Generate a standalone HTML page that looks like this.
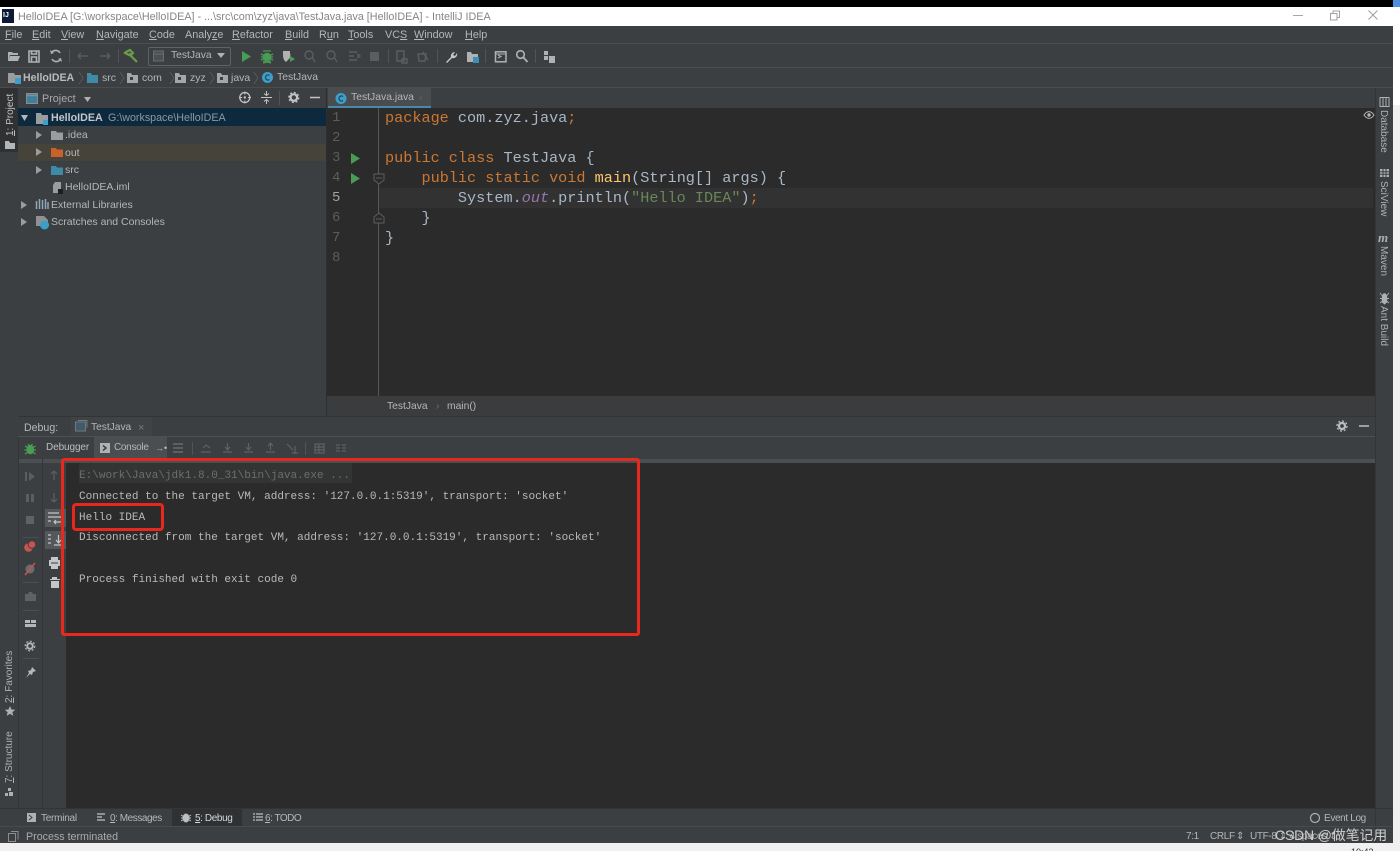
<!DOCTYPE html>
<html><head><meta charset="utf-8">
<style>
html,body{margin:0;padding:0;width:1400px;height:851px;overflow:hidden;background:#f0f0f0}
#r{position:absolute;left:0;top:0;width:1400px;height:851px;overflow:hidden;filter:blur(.35px);font-family:"Liberation Sans",sans-serif;color:#b4b7b9;font-size:11px}
.a{position:absolute}
.t{position:absolute;white-space:nowrap;line-height:14px}
.mn{position:absolute;top:28px;white-space:nowrap;line-height:14px;font-size:10.8px}
.m{position:absolute;white-space:pre;font-family:"Liberation Mono",monospace;font-size:15.2px;line-height:20px;color:#a9b7c6}
.c{position:absolute;white-space:pre;font-family:"Liberation Mono",monospace;font-size:11.03px;line-height:14px;color:#b8bab8}
.k{color:#cc7832}.g{color:#6a8759}
u{text-decoration:underline;text-underline-offset:1px}
.n{position:absolute;left:332px;font-family:"Liberation Mono",monospace;font-size:14px;line-height:20px;color:#5a5d5e}
.v{position:absolute;white-space:nowrap;transform-origin:0 0;line-height:12px;font-size:10px;color:#aeb1b3}
.b{font-size:10px;letter-spacing:-.35px}
svg{position:absolute;overflow:visible}
.sep{position:absolute;width:1px;background:#515354}
</style></head><body><div id="r">
<!-- top black / title -->
<div class="a" style="left:0;top:0;width:1393px;height:7px;background:#000"></div>
<div class="a" style="left:1393px;top:0;width:7px;height:7px;background:#4d8ee0"></div>
<div class="a" style="left:0;top:7px;width:1400px;height:19px;background:#fff"></div>
<div class="a" style="left:1393px;top:26px;width:7px;height:79px;background:#fff"></div>
<div class="a" style="left:2px;top:9px;width:12px;height:14px;background:#0c1a3a"></div>
<div class="t" style="left:3px;top:9px;font-size:7px;font-weight:bold;color:#fff">IJ</div>
<div class="t" style="left:18px;top:10px;font-size:10.77px;color:#858585">HelloIDEA [G:\workspace\HelloIDEA] - ...\src\com\zyz\java\TestJava.java [HelloIDEA] - IntelliJ IDEA</div>
<div class="a" style="left:1293px;top:15px;width:10px;height:1px;background:#a8a8a8"></div>
<svg style="left:1330px;top:10px" width="12" height="12"><path d="M.5 3.500h6.500v6.500H.5zM3 3.500V1H9.500v6.500H7" fill="none" stroke="#a0a0a0"/></svg>
<svg style="left:1368px;top:10px" width="12" height="12"><path d="M.5 .5l9 9M9.500 .5l-9 9" stroke="#a0a0a0" fill="none"/></svg>
<!-- IDE frame -->
<div class="a" style="left:0;top:26px;width:1393px;height:817px;background:#3c3f41"></div>
<div class="a" style="left:0;top:43px;width:1393px;height:1px;background:#4a4c4e"></div>
<div class="a" style="left:0;top:67px;width:1393px;height:1px;background:#4a4c4e"></div>
<div class="a" style="left:0;top:87px;width:1393px;height:1px;background:#4a4c4e"></div>
<!-- menu -->
<div class="mn" style="left:5px"><u>F</u>ile</div>
<div class="mn" style="left:32px"><u>E</u>dit</div>
<div class="mn" style="left:61px"><u>V</u>iew</div>
<div class="mn" style="left:96px"><u>N</u>avigate</div>
<div class="mn" style="left:149px"><u>C</u>ode</div>
<div class="mn" style="left:185px">Analy<u>z</u>e</div>
<div class="mn" style="left:232px"><u>R</u>efactor</div>
<div class="mn" style="left:285px"><u>B</u>uild</div>
<div class="mn" style="left:319px">R<u>u</u>n</div>
<div class="mn" style="left:348px"><u>T</u>ools</div>
<div class="mn" style="left:385px">VC<u>S</u></div>
<div class="mn" style="left:414px"><u>W</u>indow</div>
<div class="mn" style="left:465px"><u>H</u>elp</div>
<!-- toolbar -->
<svg style="left:0;top:44px" width="580" height="24">
<path d="M8 8h4l1 1h5v2H10l-2 6zM10 12h10l-2 5H8z" fill="#afb1b3"/>
<path d="M29 7h10v11H29zM31.500 7v3h5V7M31.500 13h5v5h-5z" fill="none" stroke="#afb1b3" stroke-width="1.600"/>
<path d="M60 9a5 5 0 0 0-8-1M52 15a5 5 0 0 0 8 1" fill="none" stroke="#afb1b3" stroke-width="1.600"/><path d="M50 6l1 4 3-1zM62 18l-1-4-3 1z" fill="#afb1b3"/>
<path d="M78 12h10M78 12l3-3M78 12l3 3M100 12h10M110 12l-3-3M110 12l-3 3" fill="none" stroke="#5b5e60" stroke-width="1.300"/>
<path d="M126 8l4-2 2 2 1 1-2 2-1-1-1 1-4-2zM130 11l7 7" fill="none" stroke="#6a9a4c" stroke-width="2.200"/>
<path d="M242 7l9 5.500-9 5.500z" fill="#499c54"/>
<circle cx="267" cy="13" r="4.200" fill="#499c54"/><path d="M263 7l8 0M261 10l12 6M273 10l-12 6M261 13h12M263 19l8-2M271 19l-8-2" stroke="#499c54" stroke-width="1.300"/>
<path d="M283 7h7v2a6 6 0 0 1-2 7l-2 2c-3-2-3-6-3-8z" fill="#afb1b3"/><path d="M290 12l5 3-5 3z" fill="#499c54"/>
<g fill="none" stroke="#5b5e60" stroke-width="1.400"><circle cx="309" cy="11" r="4"/><path d="M312 13l3 5"/><circle cx="331" cy="11" r="4"/><path d="M334 13l3 5"/><path d="M349 8h8M349 12h5M349 16h8M357 10l3 2-3 2"/><path d="M397 7h7v10h-7zM402 15h5v4h-5z"/><path d="M418 10h8l-1 7h-6zM423 8l5 8"/></g>
<rect x="370" y="8" width="9" height="9" fill="#5b5e60"/>
<path d="M446 18l5-5a4 4 0 0 1 4-5l-2 3 2 1 2-3a4 4 0 0 1-5 5l-5 5z" fill="#c4c6c8"/>
<path d="M467 8h4l1 2h6v8h-11z" fill="#afb1b3"/><rect x="473" y="13" width="6" height="6" fill="#3d8eb9"/>
<rect x="495.500" y="7.800" width="10.500" height="10" fill="none" stroke="#afb1b3" stroke-width="1.500"/><path d="M498 11l3 1.500-3 1.500M496 10h10" stroke="#afb1b3" fill="none"/>
<circle cx="520.500" cy="10.500" r="3.800" fill="none" stroke="#afb1b3" stroke-width="1.600"/><path d="M523.500 13.500l4 4.500" stroke="#afb1b3" stroke-width="1.800"/>
<path d="M544 7h4v4h-4zM544 12h4v4h-4zM549 12h6v7h-6z" fill="#afb1b3"/>
</svg>
<div class="sep" style="left:69px;top:49px;height:14px"></div>
<div class="sep" style="left:118px;top:49px;height:14px"></div>
<div class="sep" style="left:388px;top:49px;height:14px"></div>
<div class="sep" style="left:437px;top:49px;height:14px"></div>
<div class="sep" style="left:485px;top:49px;height:14px"></div>
<div class="sep" style="left:535px;top:49px;height:14px"></div>
<div class="a" style="left:148px;top:47px;width:81px;height:17px;border:1px solid #5f6263;border-radius:2px"></div>
<svg style="left:153px;top:50px" width="12" height="12"><rect x=".5" y="1" width="10" height="10" fill="#4b5153" stroke="#6a6d6f"/><path d="M1 4h9" stroke="#6a6d6f"/></svg>
<div class="t" style="left:171px;top:49px;font-size:10.300px">TestJava</div>
<svg style="left:217px;top:53px" width="10" height="6"><path d="M0 0h8l-4 5z" fill="#afb1b3"/></svg>
<!-- breadcrumb -->
<svg style="left:0;top:68px" width="290" height="20">
<path d="M8 5h6l1 2h6v8H8z" fill="#9a9c9e"/><rect x="15" y="10" width="6" height="6" fill="#3d9fc9"/>
<path d="M87 5h4l1 2h6v8H87z" fill="#3f8aa8"/>
<path d="M127 5h4l1 2h6v8h-11z" fill="#a4a6a8"/><rect x="130" y="9" width="3" height="3" fill="#3c3f41"/>
<path d="M175 5h4l1 2h6v8h-11z" fill="#a4a6a8"/><rect x="178" y="9" width="3" height="3" fill="#3c3f41"/>
<path d="M217 5h4l1 2h6v8h-11z" fill="#a4a6a8"/><rect x="220" y="9" width="3" height="3" fill="#3c3f41"/>
<circle cx="267.500" cy="9.500" r="5.500" fill="#3d9fc9"/><path d="M269.500 7.500a2.500 2.500 0 1 0 0 4" stroke="#24465a" fill="none" stroke-width="1.200"/>
<path d="M79 4l4 6-4 6M120 4l4 6-4 6M170 4l4 6-4 6M210 4l4 6-4 6M254 4l4 6-4 6" stroke="#56595b" fill="none"/>
</svg>
<div class="t" style="left:23px;top:71px;font-weight:bold;font-size:10.600px;color:#b8babc">HelloIDEA</div>
<div class="t" style="left:102px;top:71px;font-size:10.500px">src</div>
<div class="t" style="left:142px;top:71px;font-size:10.500px">com</div>
<div class="t" style="left:190px;top:71px;font-size:10.500px">zyz</div>
<div class="t" style="left:231px;top:71px;font-size:10.500px">java</div>
<div class="t" style="left:277px;top:71px;font-size:10.400px">TestJava</div>
<!-- left stripe -->
<div class="a" style="left:0;top:88px;width:18px;height:64px;background:#2f3133"></div>
<div class="v" style="left:5px;top:136px;transform:rotate(-90deg);color:#c0c2c4"><u>1</u>: Project</div>
<svg style="left:5px;top:141px" width="11" height="10"><path d="M0 0h4l1 2h5v6H0z" fill="#b4b6b8"/></svg>
<div class="v" style="left:4px;top:703px;transform:rotate(-90deg)"><u>2</u>: Favorites</div>
<svg style="left:5px;top:706px" width="11" height="11"><path d="M5 0l1.500 3.500 3.700.3-2.800 2.400.9 3.600L5 7.900 1.700 9.800l.9-3.600L-.2 3.800l3.700-.3z" fill="#aeb0b2"/></svg>
<div class="v" style="left:4px;top:783px;transform:rotate(-90deg)"><u>7</u>: Structure</div>
<svg style="left:5px;top:788px" width="10" height="10"><path d="M3 0h3v3H3zM0 5h3v3H0zM4 4h4v4H4z" fill="#aeb0b2"/></svg>
<!-- project header -->
<svg style="left:26px;top:93px" width="13" height="13"><rect x=".5" y=".5" width="11" height="10" fill="#3f7f9e" stroke="#8a8d8f"/><path d="M1 2.500h10" stroke="#8a8d8f" stroke-width="1.500"/></svg>
<div class="t" style="left:42px;top:92px;font-size:10.800px;color:#a6a9ab">Project</div>
<svg style="left:84px;top:97px" width="8" height="6"><path d="M0 0h7l-3.500 5z" fill="#afb1b3"/></svg>
<svg style="left:238px;top:90px" width="84" height="16">
<circle cx="6.800" cy="7.500" r="5" fill="none" stroke="#c2c4c6" stroke-width="1.300"/><circle cx="6.800" cy="7.500" r="1.200" fill="#c2c4c6"/><path d="M6.800 1.500v3M6.800 10.500v3M1 7.500h3M10 7.500h3" stroke="#c2c4c6"/>
<path d="M23 7.500h11M28.500 1v4M26 3.500l2.500 2 2.500-2M28.500 14v-4M26 11.500l2.500-2 2.500 2" stroke="#c2c4c6" fill="none"/>
<circle cx="55.800" cy="7.500" r="3.300" fill="none" stroke="#c2c4c6" stroke-width="2.200"/><circle cx="55.800" cy="7.500" r="5" fill="none" stroke="#c2c4c6" stroke-width="1.200" stroke-dasharray="2 1.900"/>
<path d="M72 7.500h10" stroke="#c2c4c6" stroke-width="1.500"/>
</svg>
<div class="sep" style="left:279px;top:91px;height:14px"></div>
<!-- tree -->
<div class="a" style="left:18px;top:108px;width:308px;height:18px;background:#0d293e"></div>
<div class="a" style="left:18px;top:144px;width:308px;height:17px;background:#45433a"></div>
<svg style="left:18px;top:108px" width="150" height="125">
<path d="M3 7h7l-3.500 6z" fill="#b4b6b8"/>
<path d="M18 23l6 4-6 4zM18 40l6 4-6 4zM18 58l6 4-6 4zM3 93l6 4-6 4zM3 110l6 4-6 4z" fill="#9a9c9e"/>
<path d="M18 5h5l1 2h6v9H18z" fill="#9a9c9e"/><rect x="25" y="12" width="5" height="5" fill="#3d9fc9"/>
<path d="M33 23h5l1 1.500h6v7.500H33z" fill="#9a9c9e"/>
<path d="M33 40h5l1 1.500h6v7.500H33z" fill="#c8622a"/>
<path d="M33 58h5l1 1.500h6v7.500H33z" fill="#3f8aa8"/>
<path d="M37 74h6v11h-8v-8z" fill="#9a9c9e"/><rect x="40" y="81" width="5" height="5" fill="#1f1f1f"/>
<path d="M18.500 93v8M21.500 91v10M24.500 92v9M27.500 91v10M30 94v7" stroke="#8ea9b8" stroke-width="1.500"/>
<path d="M18 108h8l4 4v6H18z" fill="#8f9193"/><circle cx="26.500" cy="117" r="4.500" fill="#3d9fc9"/>
</svg>
<div class="t" style="left:51px;top:111px;font-weight:bold;font-size:10.700px;color:#c4c6c8">HelloIDEA</div>
<div class="t" style="left:108px;top:111px;font-size:10.700px;color:#8a9aa6">G:\workspace\HelloIDEA</div>
<div class="t" style="left:65px;top:128px;font-size:10.500px">.idea</div>
<div class="t" style="left:65px;top:146px;font-size:10.500px">out</div>
<div class="t" style="left:65px;top:163px;font-size:10.500px">src</div>
<div class="t" style="left:65px;top:180px;font-size:10.500px">HelloIDEA.iml</div>
<div class="t" style="left:51px;top:198px;font-size:10.500px">External Libraries</div>
<div class="t" style="left:51px;top:215px;font-size:10.500px">Scratches and Consoles</div>
<!-- divider -->
<div class="a" style="left:326px;top:88px;width:1px;height:328px;background:#2c2e2f"></div>
<!-- editor -->
<div class="a" style="left:327px;top:88px;width:1048px;height:20px;background:#3c3f41"></div>
<div class="a" style="left:328px;top:88px;width:103px;height:20px;background:#4a4d4f"></div>
<div class="a" style="left:328px;top:106px;width:103px;height:2px;background:#4a88a8"></div>
<svg style="left:335px;top:92px" width="13" height="13"><circle cx="6" cy="6.500" r="5.500" fill="#3d9fc9"/><path d="M8 4.500a2.500 2.500 0 1 0 0 4" stroke="#24465a" fill="none" stroke-width="1.200"/></svg>
<div class="t" style="left:351px;top:91px;font-size:10.400px">TestJava.java</div>
<div class="t" style="left:418px;top:91px;font-size:9px;color:#5c5f61">×</div>
<div class="a" style="left:327px;top:108px;width:1048px;height:288px;background:#2b2b2b"></div>
<div class="a" style="left:378px;top:108px;width:1px;height:288px;background:#555759"></div>
<div class="a" style="left:379px;top:188px;width:994px;height:20px;background:#323232"></div>
<div class="n" style="top:108px">1</div>
<div class="n" style="top:128px">2</div>
<div class="n" style="top:148px">3</div>
<div class="n" style="top:168px">4</div>
<div class="n" style="top:188px;color:#a4a3a3">5</div>
<div class="n" style="top:208px">6</div>
<div class="n" style="top:228px">7</div>
<div class="n" style="top:248px">8</div>
<svg style="left:350px;top:152px" width="34" height="72">
<path d="M1 1l9 5.500-9 5.500zM1 21l9 5.500-9 5.500z" fill="#499c54"/>
<path d="M24 22h10v6l-5 4-5-4zM26 26h6M24 71h10v-6l-5-4-5 4zM26 67h6" fill="#2b2b2b" stroke="#5a5d5f" stroke-width="1"/>
</svg>
<div class="m" style="left:385px;top:108px"><span class="k">package</span> com.zyz.java<span class="k">;</span></div>
<div class="m" style="left:385px;top:148px"><span class="k">public class</span> TestJava {</div>
<div class="m" style="left:385px;top:168px">    <span class="k">public static void</span> <span style="color:#ffc66d">main</span>(String[] args) {</div>
<div class="m" style="left:385px;top:188px">        System.<span style="color:#9876aa;font-style:italic">out</span>.println(<span class="g">"Hello IDEA"</span>)<span class="k">;</span></div>
<div class="m" style="left:385px;top:208px">    }</div>
<div class="m" style="left:385px;top:228px">}</div>
<svg style="left:1364px;top:111px" width="11" height="8"><path d="M0 4c3-4.500 7-4.500 10 0-3 4.500-7 4.500-10 0z" fill="none" stroke="#b4b6b8"/><circle cx="5" cy="4" r="1.700" fill="#b4b6b8"/></svg>
<div class="a" style="left:327px;top:396px;width:1048px;height:20px;background:#3a3c3e"></div>
<div class="t" style="left:387px;top:400px;font-size:10.300px">TestJava</div>
<div class="t" style="left:436px;top:400px;font-size:10px;color:#6f7274">›</div>
<div class="t" style="left:447px;top:400px;font-size:10.300px">main()</div>
<!-- right stripe -->
<div class="a" style="left:1375px;top:88px;width:18px;height:755px;background:#3c3f41;border-left:1px solid #323436;box-sizing:border-box"></div>
<svg style="left:1380px;top:97px" width="11" height="210">
<path d="M0 .5h9v9H0zM3 .5v9M6 .5v9" fill="none" stroke="#aeb0b2"/>
<path d="M0 72h9v8H0z" fill="#aeb0b2"/><path d="M3 72v8M6 72v8M0 74.700h9M0 77.300h9" stroke="#3c3f41"/>
<path d="M3.500 197a2 2 0 0 1 2 0l1.200 2v6l-2.200 2-2.200-2v-6zM0 196l2.500 3M9 196l-2.500 3M0 201.500h9M0 206l2.500-2M9 206l-2.500-2" stroke="#aeb0b2" stroke-width=".9" fill="#aeb0b2"/>
</svg>
<div class="t" style="left:1378px;top:231px;font-size:13px;font-weight:bold;font-style:italic;color:#aeb0b2;font-family:'Liberation Serif',serif">m</div>
<div class="v" style="left:1389px;top:110px;transform:rotate(90deg)">Database</div>
<div class="v" style="left:1389px;top:181px;transform:rotate(90deg)">SciView</div>
<div class="v" style="left:1389px;top:246px;transform:rotate(90deg)">Maven</div>
<div class="v" style="left:1389px;top:306px;transform:rotate(90deg)">Ant Build</div>
<!-- debug panel -->
<div class="a" style="left:18px;top:416px;width:1357px;height:1px;background:#323436"></div>
<div class="a" style="left:18px;top:417px;width:1357px;height:19px;background:#3c3f41"></div>
<div class="a" style="left:18px;top:436px;width:1357px;height:1px;background:#4d5052"></div>
<div class="t" style="left:24px;top:421px;font-size:10.600px">Debug:</div>
<div class="a" style="left:71px;top:417px;width:81px;height:19px;background:#404345"></div>
<svg style="left:75px;top:420px" width="13" height="12"><rect x=".5" y="2" width="10" height="9" fill="#3f5a68" stroke="#6f7a80"/><path d="M3 .5h9v7" fill="none" stroke="#6f7a80"/></svg>
<div class="t" style="left:91px;top:421px;font-size:10.200px">TestJava</div>
<div class="t" style="left:138px;top:421px;font-size:11px;color:#77797b">×</div>
<svg style="left:1335px;top:419px" width="34" height="14"><circle cx="7" cy="7" r="3" fill="none" stroke="#bcbec0" stroke-width="2.200"/><circle cx="7" cy="7" r="5" fill="none" stroke="#bcbec0" stroke-width="1.300" stroke-dasharray="2 1.900"/><path d="M24 7h10" stroke="#bcbec0" stroke-width="1.500"/></svg>
<!-- debug tabs row -->
<div class="a" style="left:94px;top:437px;width:73px;height:22px;background:#4b4e50"></div>
<div class="a" style="left:18px;top:459px;width:1357px;height:4px;background:#4c4f51"></div>
<div class="t b" style="left:46px;top:441px;color:#bcbec0;letter-spacing:-.1px">Debugger</div>
<svg style="left:100px;top:442px" width="12" height="12"><rect width="10" height="10" y="1" fill="#afb1b3"/><path d="M3 3.500l3 2.500-3 2.500" stroke="#3c3f41" fill="none" stroke-width="1.500"/></svg>
<div class="t b" style="left:114px;top:441px;letter-spacing:-.3px">Console</div>
<div class="t" style="left:155px;top:441px;font-size:9px;color:#bcbec0">→•</div>
<svg style="left:170px;top:440px" width="190" height="16">
<path d="M3 4h10M3 8h10M3 12h10" stroke="#6f7274" stroke-width="1.200"/>
<g fill="none" stroke="#5e6163" stroke-width="1.200"><path d="M31 12h10M33 8l3-3 4 3"/><path d="M53 12h9M57.500 3v7M55 7l2.500 3 2.500-3"/><path d="M74 12h9M78.500 3v7M76 7l2.500 3 2.500-3"/><path d="M96 12h9M100.500 10V3M98 6l2.500-3 2.500 3"/><path d="M117 4l6 6M125 6v7M122 13h6"/><rect x="145" y="4" width="9" height="9"/><path d="M145 7h9M145 10h9M149 4v9"/><path d="M166 5h4M166 8h4M166 11h4M172 5h4M172 8h4M172 11h4"/></g>
</svg>
<div class="sep" style="left:192px;top:442px;height:13px"></div>
<div class="sep" style="left:305px;top:442px;height:13px"></div>
<!-- bug icon -->
<svg style="left:24px;top:442px" width="13" height="14"><ellipse cx="6.300" cy="7.500" rx="3.800" ry="4.800" fill="#499c54"/><path d="M1 4l3 2M11.500 4l-3 2M.5 8h11.500M1 12l3-2M11.500 12l-3-2M4 2l1.500 2M8.500 2L7 4" stroke="#499c54" stroke-width="1.200"/></svg>
<!-- debug left columns -->
<div class="a" style="left:18px;top:437px;width:1px;height:371px;background:#333537"></div>
<div class="a" style="left:42px;top:459px;width:1px;height:349px;background:#333537"></div>
<svg style="left:22px;top:465px" width="44" height="220">
<path d="M3 7h2v9H3zM7 7l6 4.500-6 4.500z" fill="#5b5e60"/>
<path d="M4 29h3v8H4zM9 29h3v8H9z" fill="#5b5e60"/>
<rect x="4" y="51" width="8" height="8" fill="#5f6264"/>
<circle cx="6.500" cy="82.500" r="4.300" fill="#c75450"/><circle cx="10" cy="79.500" r="3.800" fill="#c75450" stroke="#3c3f41"/>
<circle cx="8" cy="104" r="4.500" fill="#6a6d6f"/><path d="M3 110L13 98" stroke="#c75450" stroke-width="1.500"/>
<path d="M3 129h3l1-2h3l1 2h3v7H3z" fill="#5f6264"/>
<path d="M3 155h5v3H3zM9 155h5v3H9zM3 159h11v3H3z" fill="#b4b6b8"/>
<circle cx="8" cy="181" r="2.800" fill="none" stroke="#b4b6b8" stroke-width="2"/><circle cx="8" cy="181" r="4.800" fill="none" stroke="#b4b6b8" stroke-width="1.200" stroke-dasharray="2 1.700"/>
<path d="M10 202l4 4-3 1-1 3-2-1-4 4 3-5-1-2 3-1z" fill="#b4b6b8"/>
<path d="M32 15V6M32 6l-3 3M32 6l3 3M32 28v9M32 37l-3-3M32 37l3-3" stroke="#5b5e60" fill="none" stroke-width="1.300"/>
</svg>
<div class="a" style="left:23px;top:537px;width:16px;height:1px;background:#4c4f51"></div>
<div class="a" style="left:23px;top:582px;width:16px;height:1px;background:#4c4f51"></div>
<div class="a" style="left:23px;top:610px;width:16px;height:1px;background:#4c4f51"></div>
<div class="a" style="left:23px;top:658px;width:16px;height:1px;background:#4c4f51"></div>
<div class="a" style="left:45px;top:509px;width:21px;height:18px;background:#55585a"></div>
<div class="a" style="left:45px;top:531px;width:21px;height:18px;background:#55585a"></div>
<svg style="left:47px;top:511px" width="18" height="80">
<path d="M1 2h11M1 6h12a2.500 2.500 0 0 1 0 5H7M1 10h3M9 9l-2 2 2 2" stroke="#c4c6c8" fill="none" stroke-width="1.200"/>
<path d="M1 24h3M1 28h3M1 32h3M7 34h9M11.500 24v8M9 29l2.500 3 2.500-3" stroke="#c4c6c8" fill="none" stroke-width="1.200"/>
<path d="M4 46h7v3h2v6h-2v3H4v-3H2v-6h2z" fill="#c4c6c8"/><path d="M4 52h7" stroke="#3c3f41"/>
<path d="M5 66h5v2h3v1H3v-1h2zM4 70h8v7H4z" fill="#c4c6c8"/>
</svg>
<!-- console -->
<div class="a" style="left:66px;top:463px;width:1309px;height:345px;background:#2b2b2b"></div>
<div class="a" style="left:79px;top:463px;width:273px;height:20px;background:#333535"></div>
<div class="c" style="left:79px;top:469px;color:#6c6e6e">E:\work\Java\jdk1.8.0_31\bin\java.exe ...</div>
<div class="c" style="left:79px;top:490px">Connected to the target VM, address: '127.0.0.1:5319', transport: 'socket'</div>
<div class="c" style="left:79px;top:511px">Hello IDEA</div>
<div class="c" style="left:79px;top:531px">Disconnected from the target VM, address: '127.0.0.1:5319', transport: 'socket'</div>
<div class="c" style="left:79px;top:573px">Process finished with exit code 0</div>
<div class="a" style="left:61px;top:458px;width:579px;height:178px;border:3px solid #e8281c;border-radius:3px;box-sizing:border-box"></div>
<div class="a" style="left:72px;top:503px;width:92px;height:28px;border:3px solid #e8281c;border-radius:4px;box-sizing:border-box"></div>
<!-- bottom tabs -->
<div class="a" style="left:0;top:808px;width:1393px;height:1px;background:#323436"></div>
<div class="a" style="left:172px;top:809px;width:70px;height:17px;background:#2f3133"></div>
<svg style="left:27px;top:813px" width="280" height="12">
<rect width="9" height="9" y="0" fill="#aeb0b2"/><path d="M2 2l3 2.500-3 2.500" stroke="#3c3f41" fill="none"/>
<path d="M70 1h8M70 4h5M70 7h8" stroke="#c0c2c4" stroke-width="1.300"/>
<ellipse cx="159" cy="5" rx="3.500" ry="4.500" fill="#bcbec0"/><path d="M154 2l10 6M164 2l-10 6M154 5h10" stroke="#bcbec0"/>
<path d="M226 1h2M226 4h2M226 7h2M229 1h7M229 4h7M229 7h7" stroke="#bcbec0" stroke-width="1.300"/>
</svg>
<div class="t b" style="left:41px;top:812px;letter-spacing:-.25px">Terminal</div>
<div class="t b" style="left:110px;top:812px;letter-spacing:-.45px"><u>0</u>: Messages</div>
<div class="t b" style="left:195px;top:812px;color:#d4d6d8;letter-spacing:-.4px"><u>5</u>: Debug</div>
<div class="t b" style="left:265px;top:812px;letter-spacing:-.5px"><u>6</u>: TODO</div>
<svg style="left:1310px;top:813px" width="12" height="12"><circle cx="5" cy="5" r="4.500" fill="none" stroke="#aeb0b2" stroke-width="1.200"/></svg>
<div class="t b" style="left:1324px;top:812px">Event Log</div>
<div class="a" style="left:0;top:826px;width:1393px;height:1px;background:#484a4c"></div>
<svg style="left:8px;top:831px" width="11" height="11"><path d="M3 .5h7v8M.5 2.500h7v8h-7z" fill="none" stroke="#8a8c8e"/></svg>
<div class="t" style="left:26px;top:830px;font-size:10.700px;color:#a8aaac">Process terminated</div>
<div class="t b" style="left:1186px;top:830px">7:1</div>
<div class="t b" style="left:1210px;top:830px">CRLF</div>
<div class="t b" style="left:1236px;top:830px">⇕</div>
<div class="t b" style="left:1250px;top:830px">UTF-8 ⇕ 4 spaces ⇕</div>
<!-- bottom edge -->
<div class="t" style="left:1351px;top:845px;font-size:9px;color:#333">10:43</div>
<!-- watermark -->
<div class="t" style="left:1275px;top:827px;font-size:13.800px;line-height:18px;color:#d0d0d0;font-family:'Liberation Sans','Noto Sans CJK SC',sans-serif">CSDN @做笔记用</div>
</div></body></html>
